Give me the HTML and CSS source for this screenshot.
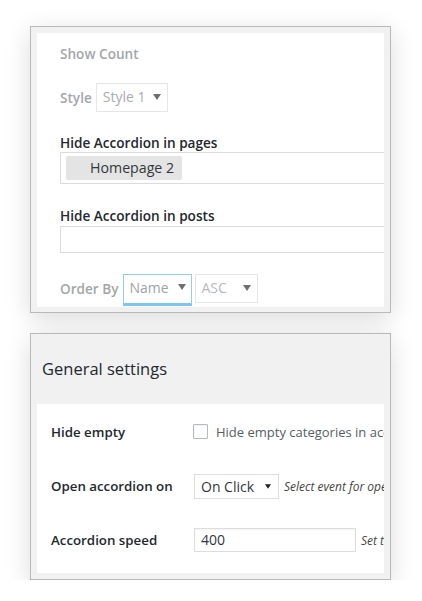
FILE: index.html
```html
<!DOCTYPE html>
<html>
<head>
<meta charset="utf-8">
<link rel="stylesheet" href="styles.css">
</head>
<body>
<div class="page">
  <div class="panel panel-one">
    <div class="inner">
      <div class="muted-label show-count">Show Count</div>
      <div class="inline-row style-row">
        <span class="muted-label">Style</span>
        <div class="select select-style"><span>Style 1</span><svg class="caret" width="8" height="6" viewBox="0 0 8 6"><path d="M0 0H8L4 6Z"/></svg></div>
      </div>
      <div class="dark-label label-pages">Hide Accordion in pages</div>
      <div class="multi multi-pages"><span class="tag">Homepage 2</span></div>
      <div class="dark-label label-posts">Hide Accordion in posts</div>
      <div class="multi multi-posts"></div>
      <div class="inline-row order-row">
        <span class="muted-label">Order By</span>
        <div class="select select-name focused"><span>Name</span><svg class="caret" width="8" height="6" viewBox="0 0 8 6"><path d="M0 0H8L4 6Z"/></svg></div>
        <div class="select select-asc"><span>ASC</span><svg class="caret" width="8" height="6" viewBox="0 0 8 6"><path d="M0 0H8L4 6Z"/></svg></div>
      </div>
    </div>
  </div>

  <div class="panel panel-two">
    <div class="header">General settings</div>
    <div class="inner body-two">
      <div class="row">
        <div class="row-label">Hide empty</div>
        <div class="row-field"><span class="checkbox"></span><span class="check-text">Hide empty categories in accordion</span></div>
      </div>
      <div class="row">
        <div class="row-label">Open accordion on</div>
        <div class="row-field"><div class="select select-click"><span>On Click</span><svg class="caret dark" width="6" height="5" viewBox="0 0 8 6"><path d="M0 0H8L4 6Z"/></svg></div><span class="hint">Select event for open accordion</span></div>
      </div>
      <div class="row">
        <div class="row-label">Accordion speed</div>
        <div class="row-field"><div class="text-input">400</div><span class="hint">Set the accordion speed</span></div>
      </div>
    </div>
  </div>
</div>
</body>
</html>
```

FILE: styles.css
```css
html, body {
  margin: 0;
  padding: 0;
  background: #ffffff;
}
body {
  font-family: "Open Sans", "Noto Sans", sans-serif;
  color: #23282d;
}
.page {
  padding: 26px 0 0 30px;
  width: 361px;
}
.panel {
  border: 1px solid #b9b9b9;
  background: #f1f1f1;
  box-shadow: 0 6px 24px rgba(0, 0, 0, 0.14);
}
.panel-one {
  padding: 6px 6px 5px 6px;
}
.inner {
  background: #ffffff;
  overflow: hidden;
  white-space: nowrap;
}
.panel-one .inner {
  padding: 12px 0 0 23px;
  height: 262px;
}
.muted-label {
  font-size: 13.6px;
  font-weight: 600;
  color: #a3a6a9;
  line-height: 18px;
}
.dark-label {
  font-size: 13.6px;
  font-weight: 600;
  color: #23282d;
  line-height: 18px;
}
.inline-row {
  display: flex;
  align-items: center;
}
.style-row {
  margin-top: 20px;
  gap: 4px;
}
.select {
  box-sizing: border-box;
  display: flex;
  align-items: center;
  justify-content: space-between;
  border: 1px solid #e6e6e6;
  background: #fff;
  font-size: 14px;
  color: #a9acaf;
}
.caret {
  fill: #6f6f6f;
  flex: none;
}
.caret.dark {
  fill: #222;
}
.select-style {
  width: 72px;
  height: 29px;
  padding: 0 6px 2px 6px;
}
.label-pages {
  margin-top: 22px;
}
.multi {
  box-sizing: border-box;
  border: 1px solid #dcdcdc;
  width: 340px;
  background: #fff;
}
.multi-pages {
  height: 32px;
  padding: 3px 0 0 5px;
}
.tag {
  display: inline-block;
  box-sizing: border-box;
  width: 116px;
  height: 24px;
  line-height: 23px;
  background: #e4e4e4;
  border-radius: 2px;
  padding-left: 24px;
  font-size: 14.2px;
  color: #32373c;
}
.label-posts {
  margin-top: 23px;
}
.multi-posts {
  margin-top: 1px;
  height: 27px;
}
.order-row {
  margin-top: 21px;
  align-items: flex-start;
  gap: 3px;
}
.order-row .muted-label {
  margin-top: 6px;
  margin-right: 1px;
}
.select-name {
  width: 69px;
  height: 32px;
  padding: 0 5px 4px 6px;
  border: 1px solid #8fcdf3;
  border-bottom: 3px solid #7ec5f2;
  color: #9ea3a8;
}
.select-asc {
  width: 63px;
  height: 29px;
  padding: 0 6px 2px 6px;
  color: #b7babd;
}

.panel-two {
  margin-top: 20px;
  padding: 0 6px 6px 6px;
}
.header {
  height: 70px;
  line-height: 70px;
  font-size: 16.5px;
  padding-left: 5px;
  color: #23282d;
}
.body-two {
  height: 169px;
  padding-left: 14px;
}
.row {
  display: flex;
  align-items: center;
  height: 54px;
}
.row:first-child {
  height: 55px;
}
.row-label {
  width: 143px;
  flex: none;
  font-size: 13.3px;
  font-weight: 600;
  color: #23282d;
}
.row-field {
  display: flex;
  align-items: center;
}
.checkbox {
  box-sizing: border-box;
  width: 15px;
  height: 15px;
  border: 1px solid #b4b9be;
  border-radius: 1px;
  background: #fff;
  margin-left: -1px;
  margin-right: 8px;
  box-shadow: inset 0 1px 2px rgba(0, 0, 0, 0.07);
}
.check-text {
  font-size: 13px;
  color: #555d66;
}
.select-click {
  width: 85px;
  height: 25px;
  padding: 0 7px 0 6px;
  border: 1px solid #dddddd;
  color: #32373c;
}
.hint {
  font-size: 12px;
  font-style: italic;
  color: #444;
  margin-left: 5px;
}
.text-input {
  box-sizing: border-box;
  width: 162px;
  height: 24px;
  line-height: 22px;
  border: 1px solid #dddddd;
  padding-left: 6px;
  font-size: 14px;
  color: #32373c;
  box-shadow: inset 0 1px 2px rgba(0, 0, 0, 0.05);
}
```
